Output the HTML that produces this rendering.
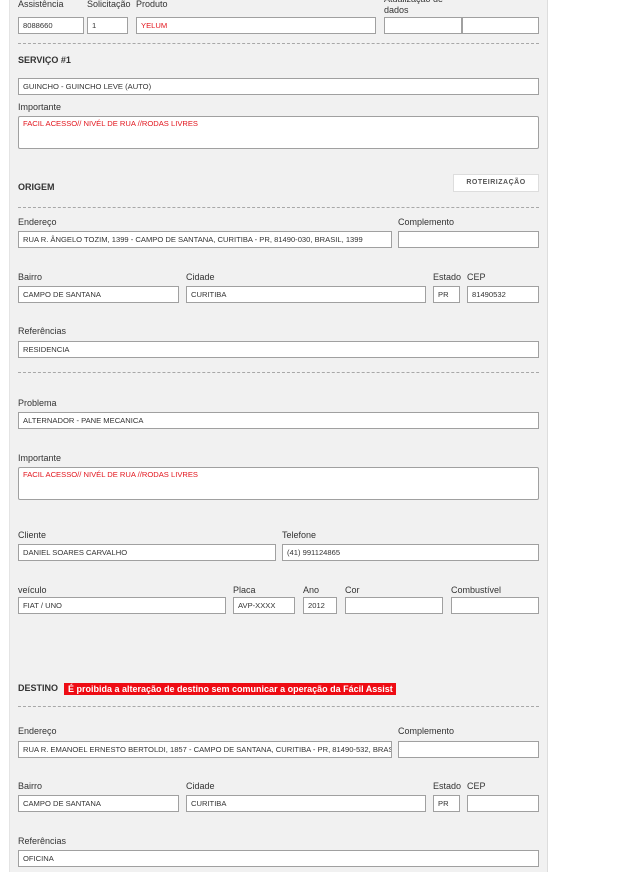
<!DOCTYPE html>
<html><head><meta charset="utf-8"><style>
body{margin:0;width:622px;height:872px;background:#fff;position:relative;overflow:hidden;font-family:"Liberation Sans",Arial,sans-serif;}
#p{position:absolute;left:9px;top:0;width:537px;height:872px;background:#f1f1f1;border-right:1px solid #ddd;border-left:1px solid #e4e4e4}
.l{position:absolute;font-size:9px;color:#333;white-space:nowrap;line-height:11px}
.i{position:absolute;height:17px;border:1px solid #a0a0a0;background:#fff;box-sizing:border-box;font-size:7.6px;color:#333;padding-left:4px;line-height:15px;white-space:nowrap;overflow:hidden}
.t{height:33px;border-radius:2px;line-height:10px;padding-top:2px}
.r{color:#e2141c}
.h{position:absolute;font-size:9px;font-weight:bold;color:#333}
.d{position:absolute;left:18px;width:521px;border-top:1px dashed #a8a8a8}
</style></head><body>
<div id="p"></div>
<div class="l" style="left:18px;top:-1px">Assistência</div>
<div class="l" style="left:87px;top:-1px">Solicitação</div>
<div class="l" style="left:136px;top:-1px">Produto</div>
<div class="l" style="left:384px;top:-6px">Atualização de<br>dados</div>
<div class="i" style="left:18px;top:17px;width:66px">8088660</div>
<div class="i" style="left:87px;top:17px;width:41px">1</div>
<div class="i r" style="left:136px;top:17px;width:240px">YELUM</div>
<div class="i" style="left:384px;top:17px;width:78px"></div>
<div class="i" style="left:462px;top:17px;width:77px"></div>
<div class="d" style="top:43px"></div>
<div class="h" style="left:18px;top:55px">SERVIÇO #1</div>
<div class="i" style="left:18px;top:78px;width:521px">GUINCHO - GUINCHO LEVE (AUTO)</div>
<div class="l" style="left:18px;top:102px">Importante</div>
<div class="i t r" style="left:18px;top:116px;width:521px">FACIL ACESSO// NIVÉL DE RUA //RODAS LIVRES</div>
<div class="h" style="left:18px;top:182px">ORIGEM</div>
<div style="position:absolute;left:453px;top:174px;width:86px;height:18px;box-sizing:border-box;border:1px solid #ddd;background:#fff;font-size:7px;font-weight:bold;letter-spacing:.5px;color:#555;text-align:center;line-height:16px">ROTEIRIZAÇÃO</div>
<div class="d" style="top:207px"></div>
<div class="l" style="left:18px;top:217px">Endereço</div>
<div class="l" style="left:398px;top:217px">Complemento</div>
<div class="i" style="left:18px;top:231px;width:374px">RUA R. ÂNGELO TOZIM, 1399 - CAMPO DE SANTANA, CURITIBA - PR, 81490-030, BRASIL, 1399</div>
<div class="i" style="left:398px;top:231px;width:141px"></div>
<div class="l" style="left:18px;top:272px">Bairro</div>
<div class="l" style="left:186px;top:272px">Cidade</div>
<div class="l" style="left:433px;top:272px">Estado</div>
<div class="l" style="left:467px;top:272px">CEP</div>
<div class="i" style="left:18px;top:286px;width:161px">CAMPO DE SANTANA</div>
<div class="i" style="left:186px;top:286px;width:240px">CURITIBA</div>
<div class="i" style="left:433px;top:286px;width:27px">PR</div>
<div class="i" style="left:467px;top:286px;width:72px">81490532</div>
<div class="l" style="left:18px;top:326px">Referências</div>
<div class="i" style="left:18px;top:341px;width:521px">RESIDENCIA</div>
<div class="d" style="top:372px"></div>
<div class="l" style="left:18px;top:398px">Problema</div>
<div class="i" style="left:18px;top:412px;width:521px">ALTERNADOR - PANE MECANICA</div>
<div class="l" style="left:18px;top:453px">Importante</div>
<div class="i t r" style="left:18px;top:467px;width:521px">FACIL ACESSO// NIVÉL DE RUA //RODAS LIVRES</div>
<div class="l" style="left:18px;top:530px">Cliente</div>
<div class="l" style="left:282px;top:530px">Telefone</div>
<div class="i" style="left:18px;top:544px;width:258px">DANIEL SOARES CARVALHO</div>
<div class="i" style="left:282px;top:544px;width:257px">(41) 991124865</div>
<div class="l" style="left:18px;top:585px">veículo</div>
<div class="l" style="left:233px;top:585px">Placa</div>
<div class="l" style="left:303px;top:585px">Ano</div>
<div class="l" style="left:345px;top:585px">Cor</div>
<div class="l" style="left:451px;top:585px">Combustível</div>
<div class="i" style="left:18px;top:597px;width:208px">FIAT / UNO</div>
<div class="i" style="left:233px;top:597px;width:62px">AVP-XXXX</div>
<div class="i" style="left:303px;top:597px;width:34px">2012</div>
<div class="i" style="left:345px;top:597px;width:98px"></div>
<div class="i" style="left:451px;top:597px;width:88px"></div>
<div class="h" style="left:18px;top:683px">DESTINO</div>
<div style="position:absolute;left:64px;top:683px;width:332px;height:12px;background:#ee0c14;color:#fff;font-size:9px;font-weight:bold;line-height:12px;padding-left:4px;box-sizing:border-box;white-space:nowrap;overflow:hidden">É proibida a alteração de destino sem comunicar a operação da Fácil Assist</div>
<div class="d" style="top:706px"></div>
<div class="l" style="left:18px;top:726px">Endereço</div>
<div class="l" style="left:398px;top:726px">Complemento</div>
<div class="i" style="left:18px;top:741px;width:374px">RUA R. EMANOEL ERNESTO BERTOLDI, 1857 - CAMPO DE SANTANA, CURITIBA - PR, 81490-532, BRASIL</div>
<div class="i" style="left:398px;top:741px;width:141px"></div>
<div class="l" style="left:18px;top:781px">Bairro</div>
<div class="l" style="left:186px;top:781px">Cidade</div>
<div class="l" style="left:433px;top:781px">Estado</div>
<div class="l" style="left:467px;top:781px">CEP</div>
<div class="i" style="left:18px;top:795px;width:161px">CAMPO DE SANTANA</div>
<div class="i" style="left:186px;top:795px;width:240px">CURITIBA</div>
<div class="i" style="left:433px;top:795px;width:27px">PR</div>
<div class="i" style="left:467px;top:795px;width:72px"></div>
<div class="l" style="left:18px;top:836px">Referências</div>
<div class="i" style="left:18px;top:850px;width:521px">OFICINA</div>
</body></html>
